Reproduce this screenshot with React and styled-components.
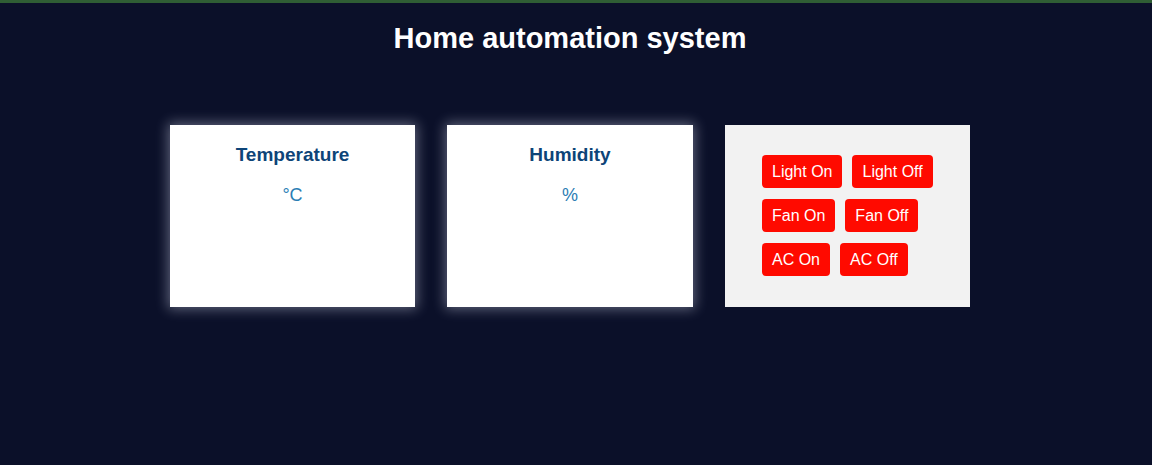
import React from "react";
import styled, { createGlobalStyle } from "styled-components";

const Global = createGlobalStyle`
  html, body { margin: 0; padding: 0; }
  body {
    background: #0b1029;
    font-family: "Liberation Sans", Arial, sans-serif;
    border-top: 3px solid #2f5e34;
    min-height: 462px;
  }
`;

const Page = styled.div`
  display: flex;
  flex-direction: column;
  align-items: center;
  padding-right: 12px;
`;

const Title = styled.h1`
  margin: 19px 0 0;
  color: #ffffff;
  font-size: 29px;
  font-weight: bold;
  line-height: 33px;
`;

const Cards = styled.div`
  display: flex;
  gap: 32px;
  margin-top: 70px;
`;

const Card = styled.div`
  width: ${(p) => p.$w || 245}px;
  height: 182px;
  box-sizing: border-box;
  background: ${(p) => (p.$plain ? "#f2f2f2" : "#ffffff")};
  box-shadow: ${(p) => (p.$plain ? "none" : "0 0 12px 2px rgba(200, 205, 225, 0.45)")};
  display: flex;
  flex-direction: column;
  align-items: ${(p) => (p.$plain ? "flex-start" : "center")};
  padding: ${(p) => (p.$plain ? "30px 0 0 37px" : "19px 0 0")};
`;

const CardTitle = styled.div`
  color: #0d4478;
  font-size: 19px;
  font-weight: bold;
  line-height: 22px;
`;

const Value = styled.div`
  color: #2b7db4;
  font-size: 18px;
  line-height: 22px;
  margin-top: 18px;
`;

const Row = styled.div`
  display: flex;
  gap: 10px;
  margin-bottom: 11px;
`;

const Btn = styled.button`
  background: #ff0a00;
  color: #ffffff;
  border: none;
  border-radius: 4px;
  font-family: "Liberation Sans", Arial, sans-serif;
  font-size: 16px;
  line-height: 17px;
  height: 33px;
  padding: 0 10px;
  cursor: pointer;
`;

export default function App() {
  return (
    <>
      <Global />
      <Page>
        <Title>Home automation system</Title>
        <Cards>
          <Card>
            <CardTitle>Temperature</CardTitle>
            <Value>°C</Value>
          </Card>
          <Card $w={246}>
            <CardTitle>Humidity</CardTitle>
            <Value>%</Value>
          </Card>
          <Card $plain>
            <Row>
              <Btn>Light On</Btn>
              <Btn>Light Off</Btn>
            </Row>
            <Row>
              <Btn>Fan On</Btn>
              <Btn>Fan Off</Btn>
            </Row>
            <Row>
              <Btn>AC On</Btn>
              <Btn>AC Off</Btn>
            </Row>
          </Card>
        </Cards>
      </Page>
    </>
  );
}
